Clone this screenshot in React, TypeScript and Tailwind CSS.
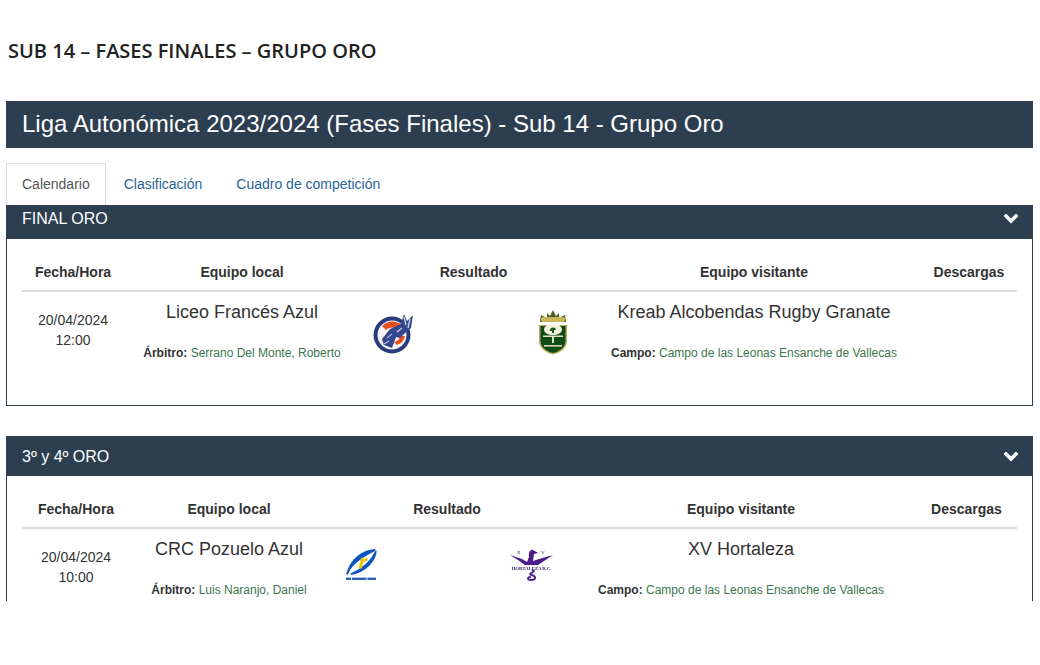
import type { ReactNode } from "react";

const HEADERS = ["Fecha/Hora", "Equipo local", "Resultado", "Equipo visitante", "Descargas"];

const Chevron = () => (
  <svg width="14" height="10" viewBox="0 0 14 10" className="block">
    <path d="M2 2 L7 7 L12 2" fill="none" stroke="#fff" strokeWidth="3.6" strokeLinecap="square" />
  </svg>
);

// Escudos de los equipos
const LiceoLogo = () => (
  <svg width="42" height="42" viewBox="0 0 42 42" className="block blur-[0.4px]">
    <circle cx="19" cy="23" r="18.5" fill="#2b3a78" />
    <circle cx="19" cy="23" r="14.5" fill="#f4f4f8" />
    <path d="M9 14 A14 14 0 0 1 31 16 L27 20 A9 9 0 0 0 13 18 Z" fill="#e8501f" />
    <path d="M24 33 A12 12 0 0 0 32 24 L27 24 A7 7 0 0 1 21 30 Z" fill="#e8501f" />
    <path d="M9 27 L17 17 L28 12 L31 2 L34 9 L40 3 L38 16 L31 22 L27 26 L23 25 L19 36 L11 33 Z" fill="#34478c" />
    <path d="M31 5 L33 13 M37 7 L35 16 M24 20 L29 16" stroke="#c9cfe6" strokeWidth="1.4" />
    <path d="M11 32 L16 29 M14 26 L19 22" stroke="#dfe2f0" strokeWidth="1" />
  </svg>
);

const KreabLogo = () => (
  <svg width="30" height="45" viewBox="0 0 30 45" className="block blur-[0.4px]">
    <path d="M3 5 L9 8 L9 3 L12 6 L15 0 L18 6 L21 3 L21 8 L27 5 L28 12 L2 12 Z" fill="#4b5d1f" />
    <rect x="3" y="7" width="24" height="5" rx="2" fill="#c8b75a" />
    <path d="M1 15 H29 V31 C29 39 21 43 15 44.5 C9 43 1 39 1 31 Z" fill="#b9ad5c" />
    <path d="M2.5 16 H27.5 V31 C27.5 38 20 42 15 43 C10 42 2.5 38 2.5 31 Z" fill="#0f4d17" />
    <ellipse cx="15" cy="19.5" rx="9" ry="5.5" fill="#f5f3df" />
    <path d="M12 21 C11 17 18 16 18 20 L16 20 L16 23 L14 23 L14 21 Z" fill="#1b5b22" />
    <rect x="14" y="26" width="2" height="7" fill="#e7e4c4" />
    <rect x="5" y="25.5" width="20" height="1.5" fill="#e7e4c4" />
    <rect x="6" y="35" width="18" height="1.6" fill="#d8d8b8" />
  </svg>
);

const CrcLogo = () => (
  <svg width="33" height="32" viewBox="0 0 34 33" className="block blur-[0.4px]">
    <path d="M31 1 C19 2 7 9 2 26 C5 17 15 9 31 1 Z" fill="#0d56c0" stroke="#0d56c0" strokeWidth="2" />
    <path d="M32 2 C31 12 22 23 6 26 C17 21 27 13 32 2 Z" fill="#0d56c0" stroke="#0d56c0" strokeWidth="1.5" />
    <path d="M14 20 L16.5 9 L19 9 L18.7 11 C20 9.5 22 9 23.5 9.5 L22.8 12.5 C20.5 12 19 13 18.4 15 L17.3 20 Z" fill="#f4c20d" />
    <rect x="1" y="29.5" width="5" height="2.5" fill="#2a5fb5" />
    <rect x="7" y="29.5" width="15" height="2.5" fill="#2a5fb5" />
    <rect x="23" y="29.5" width="9" height="2.5" fill="#2a5fb5" />
  </svg>
);

const HortalezaLogo = () => (
  <svg width="43" height="32" viewBox="0 0 43 32" className="block blur-[0.3px]">
    <text x="7" y="5" fontSize="5" fill="#332255" fontFamily="Liberation Serif, serif">X</text>
    <text x="31" y="5" fontSize="5" fill="#332255" fontFamily="Liberation Serif, serif">V</text>
    <path d="M0 6 L12 10 L17 13 L19 8 C18 3 21 0 23 1 L28 4 L24 5 L23 12 L29 10 L43 6 L34 12 L28 16 H15 L8 11 Z" fill="#4a1c8c" />
    <text x="21.5" y="20.5" fontSize="5" textAnchor="middle" fontWeight="700" fill="#3c2a70" fontFamily="Liberation Serif, serif" textLength="40">HORTALEZA R.C.</text>
    <path d="M22 21 C28 23 17 24 21 26 C27 27 26 31 21 31 C17 31 17 28 21 28" fill="none" stroke="#4a1c8c" strokeWidth="1.8" />
  </svg>
);

type Match = {
  title: string;
  head: string;
  open: string;
  grid: string;
  logoRow: string;
  date: string;
  time: string;
  home: string;
  away: string;
  referee: string;
  homeLogo: ReactNode;
  awayLogo: ReactNode;
};

const MATCHES: Match[] = [
  {
    title: "FINAL ORO",
    head: "h-[34px] pb-[6px]",
    open: "h-[201px]",
    grid: "grid-cols-[102px_236px_227px_334px_96px]",
    logoRow: "pl-[13px] pr-[19px] pt-[18px]",
    date: "20/04/2024",
    time: "12:00",
    home: "Liceo Francés Azul",
    away: "Kreab Alcobendas Rugby Granate",
    referee: "Serrano Del Monte, Roberto",
    homeLogo: <LiceoLogo />,
    awayLogo: <KreabLogo />,
  },
  {
    title: "3º y 4º ORO",
    head: "h-[40px] pt-[1px]",
    open: "h-[200px]",
    grid: "grid-cols-[108px_198px_238px_350px_101px]",
    logoRow: "pl-[17px] pr-[13px] pt-[20px]",
    date: "20/04/2024",
    time: "10:00",
    home: "CRC Pozuelo Azul",
    away: "XV Hortaleza",
    referee: "Luis Naranjo, Daniel",
    homeLogo: <CrcLogo />,
    awayLogo: <HortalezaLogo />,
  },
];

const MatchPanel = ({ m }: { m: Match }) => (
  <section className={`${m.open} border border-[#2c3e50] border-t-0 shrink-0`}>
    <div className={`${m.head} -mx-px flex items-center justify-between bg-[#2c3e50] pl-[16px] pr-[15px] text-white text-[16px]`}>
      <span>{m.title}</span>
      <Chevron />
    </div>
    <div className="px-[15px] pt-[23px]">
      <div className={`grid ${m.grid} h-[30px] border-b-2 border-[#ddd] text-[14px] font-bold text-[#333] text-center leading-[20px]`}>
        {HEADERS.map((h) => (
          <div key={h}>{h}</div>
        ))}
      </div>
      <div className={`grid ${m.grid} text-center text-[#333]`}>
        <div className="pt-[18px] text-[14px] leading-[20px]">
          {m.date}
          <br />
          {m.time}
        </div>
        <div>
          <div className="pt-[8px] text-[18px] leading-[24px]">{m.home}</div>
          <div className="pt-[21px] text-[12px] leading-[17px]">
            <b>Árbitro:</b> <span className="text-[#3c7650]">{m.referee}</span>
          </div>
        </div>
        <div className={`flex justify-between items-center self-start ${m.logoRow}`}>
          {m.homeLogo}
          {m.awayLogo}
        </div>
        <div>
          <div className="pt-[8px] text-[18px] leading-[24px]">{m.away}</div>
          <div className="pt-[21px] text-[12px] leading-[17px]">
            <b>Campo:</b> <span className="text-[#3c7650]">Campo de las Leonas Ensanche de Vallecas</span>
          </div>
        </div>
        <div />
      </div>
    </div>
  </section>
);

export default function App() {
  return (
    <div className="h-[665px] bg-white font-['Liberation_Sans',Arial,sans-serif] overflow-hidden">
      <div className="h-[601px] overflow-hidden px-[6px] w-[1039px]">
        <h2 className="pt-[38px] pl-[2px] h-[101px] text-[20px] leading-[26px] font-semibold text-[#222] font-['Open_Sans',sans-serif]">
          SUB 14 – FASES FINALES – GRUPO ORO
        </h2>
        <div className="h-[47px] flex items-center bg-[#2c3e50] pl-[16px] pb-[1px] text-[24px] text-white">
          Liga Autonómica 2023/2024 (Fases Finales) - Sub 14 - Grupo Oro
        </div>
        <div className="mt-[15px] h-[42px] flex text-[14px] text-[#2a6496]">
          <div className="h-[42px] z-10 flex items-center px-[15px] bg-white border border-[#ddd] border-b-0 text-[#555]">Calendario</div>
          <div className="flex items-center px-[18px]">Clasificación</div>
          <div className="flex items-center px-[16px]">Cuadro de competición</div>
        </div>
        <div className="flex flex-col gap-[30px]">
          {MATCHES.map((m) => (
            <MatchPanel key={m.title} m={m} />
          ))}
        </div>
      </div>
    </div>
  );
}
